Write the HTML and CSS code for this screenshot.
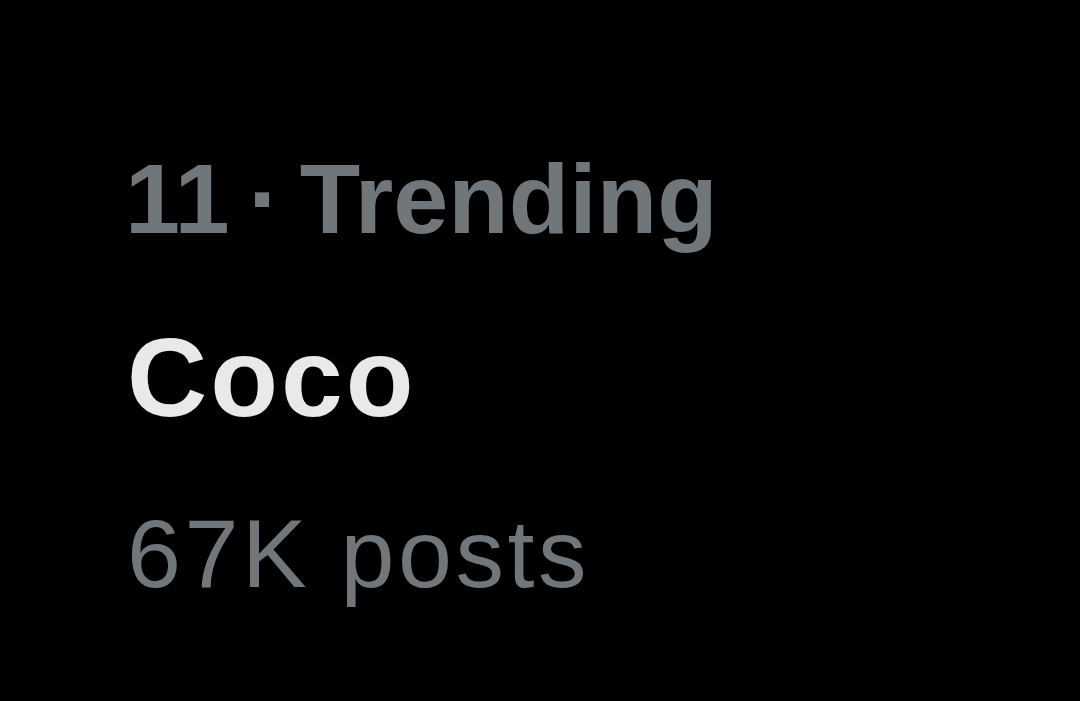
FILE: index.html
```html
<!DOCTYPE html>
<html lang="en">
<head>
    <meta charset="utf-8">
    <link rel="stylesheet" href="styles.css">
</head>
<body>
    <div class="trend">
        <p class="meta">11 · Trending</p>
        <p class="topic">Coco</p>
        <p class="count">67K posts</p>
    </div>
</body>
</html>
```

FILE: styles.css
```css
*{
    box-sizing: border-box;
    margin: 0;
    padding: 0;
}
body{
    background: #000;
    font-family: "Liberation Sans", Arial, sans-serif;
    height: 701px;
    overflow: hidden;
}
.trend{
    padding: 149px 0 0 127px;
    display: flex;
    flex-direction: column;
    align-items: flex-start;
}
.meta{
    color: #71767b;
    font-size: 99px;
    font-weight: 700;
    word-spacing: -9px;
    line-height: 99px;
    margin-left: -2px;
}
.topic{
    color: #e7e9ea;
    font-size: 111px;
    font-weight: 700;
    letter-spacing: 3px;
    line-height: 111px;
    margin-top: 75px;
}
.count{
    color: #71767b;
    font-size: 97px;
    font-weight: 400;
    letter-spacing: 3.5px;
    line-height: 97px;
    margin-top: 71px;
}
```
